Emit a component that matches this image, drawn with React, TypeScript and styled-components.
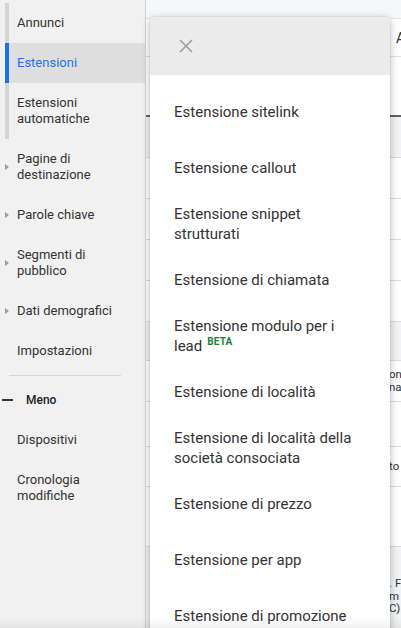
import React from "react";
import styled, { createGlobalStyle } from "styled-components";

const GlobalStyle = createGlobalStyle`
  body {
    margin: 0;
    font-family: Roboto, "Liberation Sans", Arial, sans-serif;
    overflow: hidden;
  }
`

const Page = styled.div`
  position: relative;
  display: flex;
  width: 401px;
  height: 628px;
  overflow: hidden;
  background: #ffffff;
`

const Sidebar = styled.nav`
  width: 145px;
  flex-shrink: 0;
  background: #f1f1f1;
  border-right: 1px solid #d4d4d4;
  padding-top: 3px;
  font-size: 13px;
  color: #333;
`

const Track = styled.div`
  margin-left: 5px;
`

const TrackItem = styled.div<{ $selected?: boolean; $two?: boolean }>`
  border-left: 4px solid ${p => (p.$selected ? "#1a73e8" : "#d5d5d5")};
  background: ${p => (p.$selected ? "#dedede" : "transparent")};
  color: ${p => (p.$selected ? "#1a73e8" : "#333")};
  padding: 12px 8px;
  line-height: 16px;
  height: ${p => (p.$two ? "32px" : "16px")};
`

const NavItem = styled.div<{ $caret?: boolean }>`
  display: flex;
  align-items: center;
  padding: 12px 8px 12px ${p => (p.$caret ? "5px" : "17px")};
  line-height: 16px;
  > i {
    width: 0;
    height: 0;
    border-top: 3px solid transparent;
    border-bottom: 3px solid transparent;
    border-left: 4px solid #9e9e9e;
    margin-right: 8px;
    flex-shrink: 0;
  }
`

const Divider = styled.hr`
  border: none;
  border-top: 1px solid #d6d6d6;
  margin: 4px 0 4px 9px;
  width: 112px;
`

const LessRow = styled.div`
  display: flex;
  align-items: center;
  height: 40px;
  padding-left: 2px;
  font-size: 12px;
  font-weight: 500;
  color: #222;
  > b {
    width: 11px;
    height: 2px;
    background: #333;
    margin-right: 13px;
  }
`

const Main = styled.div`
  flex: 1;
  display: flex;
  flex-direction: column;
  background: #fff;
  font-size: 12px;
  color: #333;
`

const TopStrip = styled.div`
  height: 18px;
  background: #f6f7f8;
  border-bottom: 1px solid #e6e6e6;
`

const HeadCell = styled.div`
  height: 37px;
  padding-left: 250px;
  display: flex;
  align-items: center;
  font-size: 14px;
  border-bottom: 1px solid #e0e0e0;
`

const HeadSpace = styled.div`
  height: 58px;
  border-bottom: 2px solid #5f6368;
`

const Row = styled.div<{ $h: number; $grey?: boolean }>`
  height: ${p => p.$h - 1}px;
  background: ${p => (p.$grey ? "#f1f3f4" : "#fff")};
  border-bottom: 1px solid #dcdcdc;
  padding-left: 243px;
  display: flex;
  flex-direction: column;
  justify-content: center;
  font-size: 11.5px;
  line-height: 13px;
  white-space: nowrap;
`

const FootRow = styled.div`
  flex: 1;
  background: #f1f3f4;
  padding: 30px 0 0 243px;
  line-height: 12.5px;
  font-size: 11.5px;
  white-space: nowrap;
  span {
    color: #1a73e8;
  }
`

const Popup = styled.div`
  position: absolute;
  left: 150px;
  top: 17px;
  width: 240px;
  bottom: -20px;
  background: #fff;
  border-radius: 4px 4px 0 0;
  box-shadow: 0 2px 8px rgba(0, 0, 0, 0.28), 0 0 2px rgba(0, 0, 0, 0.12);
`

const PopupHeader = styled.div`
  height: 58px;
  background: #ebebeb;
  border-radius: 4px 4px 0 0;
  display: flex;
  align-items: center;
  padding-left: 29px;
`

const Options = styled.ul`
  list-style: none;
  margin: 0;
  padding: 9px 0 0;
`

const Option = styled.li`
  height: 56px;
  display: flex;
  align-items: center;
  padding: 0 24px;
  font-size: 15px;
  line-height: 20px;
  color: #333;
  sup {
    font-size: 10px;
    font-weight: 700;
    color: #188038;
    margin-left: 5px;
    vertical-align: 6px;
    line-height: 0;
    letter-spacing: 0.2px;
  }
`

const BottomShade = styled.div`
  position: absolute;
  left: 0;
  right: 0;
  bottom: 0;
  height: 10px;
  background: linear-gradient(rgba(0, 0, 0, 0), rgba(0, 0, 0, 0.06));
  pointer-events: none;
`

const options: React.ReactNode[] = [
  "Estensione sitelink",
  "Estensione callout",
  "Estensione snippet strutturati",
  "Estensione di chiamata",
  <>Estensione modulo per i lead<sup>BETA</sup></>,
  "Estensione di località",
  "Estensione di località della società consociata",
  "Estensione di prezzo",
  "Estensione per app",
  "Estensione di promozione",
]

export default function App() {
  return (
    <Page>
      <GlobalStyle />
      <Sidebar>
        <Track>
          <TrackItem>Annunci</TrackItem>
          <TrackItem $selected>Estensioni</TrackItem>
          <TrackItem $two>Estensioni<br />automatiche</TrackItem>
        </Track>
        <NavItem $caret><i /><span>Pagine di<br />destinazione</span></NavItem>
        <NavItem $caret><i /><span>Parole chiave</span></NavItem>
        <NavItem $caret><i /><span>Segmenti di<br />pubblico</span></NavItem>
        <NavItem $caret><i /><span>Dati demografici</span></NavItem>
        <NavItem>Impostazioni</NavItem>
        <Divider />
        <LessRow><b />Meno</LessRow>
        <NavItem>Dispositivi</NavItem>
        <NavItem>Cronologia<br />modifiche</NavItem>
      </Sidebar>

      <Main>
        <TopStrip />
        <HeadCell>A</HeadCell>
        <HeadSpace />
        <Row $h={41} $grey />
        <Row $h={41} />
        <Row $h={41} />
        <Row $h={41} />
        <Row $h={41} />
        <Row $h={39} $grey />
        <Row $h={41}><span>on</span><span>na</span></Row>
        <Row $h={45} />
        <Row $h={40}><span>to</span></Row>
        <Row $h={60} />
        <FootRow>
          <div><span>.</span> F</div>
          <div>m</div>
          <div>C)</div>
        </FootRow>
      </Main>

      <Popup>
        <PopupHeader>
          <svg width="14" height="14" viewBox="0 0 14 14">
            <path d="M1 1 L13 13 M13 1 L1 13" stroke="#9e9e9e" strokeWidth="1.6" />
          </svg>
        </PopupHeader>
        <Options>
          {options.map((o, i) => (
            <Option key={i}>
              <span>{o}</span>
            </Option>
          ))}
        </Options>
      </Popup>
      <BottomShade />
    </Page>
  );
}
